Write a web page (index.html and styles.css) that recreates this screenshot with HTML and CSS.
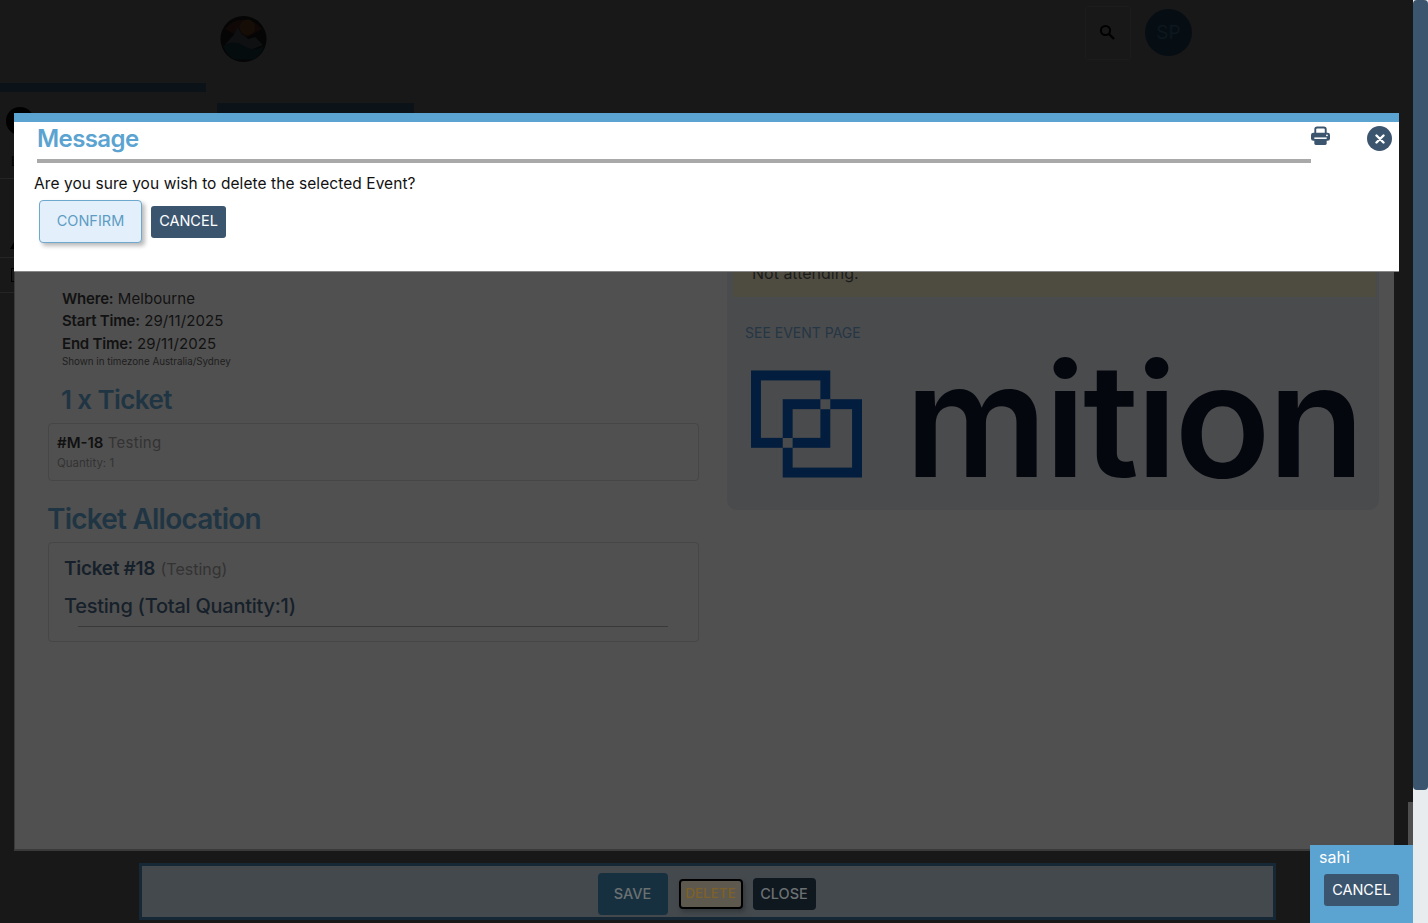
FILE: index.html
```html
<!DOCTYPE html>
<html lang="en">
<head>
<meta charset="utf-8">
<title>Message</title>
<link rel="stylesheet" href="styles.css">
</head>
<body>
<div class="page">
  <div class="main">
    <header class="topbar">
      <div class="brand">
        <svg class="logo" viewBox="0 0 48 48" aria-hidden="true">
          <circle cx="24" cy="24" r="23.5" fill="#050506"/>
          <path d="M5 14A23 23 0 0 1 43 14L24 24Z" fill="#0f0807"/>
          <circle cx="28" cy="12" r="8" fill="#160e06"/>
          <path d="M4 31L14 20L18 12L22 19L29 24L36 22L44 30L24 38Z" fill="#0e1011"/>
          <path d="M3 31Q14 24 24 31T45 31Q42 42 34 45L14 45Q6 40 3 31Z" fill="#050c0e"/>
        </svg>
      </div>
      <div class="actions">
        <div class="search">
          <svg viewBox="0 0 16 16" class="search-icon" aria-hidden="true"><circle cx="6.5" cy="6.5" r="4.6" fill="none" stroke="#000" stroke-width="2"/><path d="M10 10L15 15" stroke="#000" stroke-width="2.4"/></svg>
        </div>
        <div class="avatar">SP</div>
      </div>
    </header>
    <div class="subbar">
      <div class="side-strip"></div>
      <div class="tab-strip"></div>
    </div>
    <div class="rail">
      <div class="rail-dot"></div>
      <div class="rail-l">L</div>
      <div class="rail-line one"></div>
      <div class="rail-tri"></div>
      <div class="rail-line two"></div>
      <div class="rail-box"></div>
      <div class="rail-line three"></div>
    </div>
  </div>
  <div class="scroll"><div class="thumb"></div></div>

  <section class="dialog">
    <div class="dialog-col left">
      <p class="line"><b>Where:</b> Melbourne</p>
      <p class="line"><b>Start Time:</b> 29/11/2025</p>
      <p class="line"><b>End Time:</b> 29/11/2025</p>
      <p class="tz">Shown in timezone Australia/Sydney</p>
      <h2 class="h-ticket">1 x Ticket</h2>
      <div class="ticket-box">
        <div class="ticket-name"><b>#M-18</b> <span>Testing</span></div>
        <div class="ticket-qty">Quantity: 1</div>
      </div>
      <h2 class="h-alloc">Ticket Allocation</h2>
      <div class="alloc-box">
        <div class="alloc-title"><b>Ticket #18</b> <span>(Testing)</span></div>
        <div class="alloc-sub">Testing (Total Quantity:1)</div>
        <div class="alloc-rule"></div>
      </div>
    </div>
    <div class="dialog-col right">
      <div class="event-card">
        <div class="notice">Not attending.</div>
        <a class="event-link">SEE EVENT PAGE</a>
        <div class="mition">
          <svg class="mition-mark" viewBox="0 0 112 108" aria-hidden="true">
            <rect x="5" y="5" width="70" height="68" fill="none" stroke="#021d3e" stroke-width="10"/>
            <rect x="37" y="34" width="70" height="69" fill="none" stroke="#021d3e" stroke-width="10"/>
            <path fill="#4a4b4d" d="M70 29H80V39H70ZM32 68H42V78H32Z"/>
          </svg>
          <span class="mition-word">mition</span>
        </div>
      </div>
    </div>
  </section>

  <div class="footer-bar">
    <button class="fbtn save">SAVE</button>
    <button class="fbtn delete">DELETE</button>
    <button class="fbtn close">CLOSE</button>
  </div>

  <div class="side-sliver"></div>

  <section class="modal">
    <div class="modal-head">
      <h1 class="modal-title">Message</h1>
      <svg class="print" viewBox="0 0 20 20" aria-hidden="true">
        <path fill="none" stroke="#3b556f" stroke-width="2" d="M4.5 7V3Q4.5 1 6.5 1H13.5Q15.5 1 15.5 3V7"/>
        <rect x="0" y="6.5" width="20" height="8.5" rx="2.5" fill="#3b556f"/>
        <rect x="3.5" y="11" width="13" height="8.5" rx="1.5" fill="#3b556f"/>
        <rect x="3.5" y="11.5" width="13" height="1.6" fill="#fff"/>
        <circle cx="16.8" cy="9.3" r="1" fill="#fff"/>
      </svg>
      <div class="x-btn"><svg viewBox="0 0 10 10" aria-hidden="true"><path d="M1.5 1.5L8.5 8.5M8.5 1.5L1.5 8.5" stroke="#fff" stroke-width="2.4" stroke-linecap="round"/></svg></div>
    </div>
    <p class="modal-text">Are you sure you wish to delete the selected Event?</p>
    <div class="modal-actions">
      <button class="btn-confirm">CONFIRM</button>
      <button class="btn-cancel">CANCEL</button>
    </div>
  </section>

  <aside class="toast">
    <div class="toast-name">sahi</div>
    <button class="btn-cancel toast-btn">CANCEL</button>
  </aside>
</div>
</body>
</html>
```
FILE: styles.css
```css
* { box-sizing: border-box; }
html, body { margin: 0; padding: 0; height: 100%; overflow: hidden; }
body { font-family: "Inter", "Open Sans", sans-serif; background: #181818; color: #111; }
button { font-family: inherit; border: 0; cursor: pointer; }
h1, h2, p { margin: 0; }

.page { position: relative; display: flex; width: 1428px; height: 923px; overflow: hidden; background: #181818; }
.main { flex: 1; min-width: 0; }

.scroll { width: 15px; background: #e8ecef; }
.thumb { height: 790px; background: #3b556f; border-radius: 4px; }

.topbar { display: flex; justify-content: space-between; height: 83px; }
.brand { padding: 15px 0 0 220px; }
.logo { display: block; width: 47px; height: 48px; }
.actions { display: flex; gap: 14px; padding: 6px 221px 0 0; }
.search { display: flex; align-items: center; justify-content: center; width: 46px; height: 54px; border: 1px solid #1c1c1c; border-radius: 3px; }
.search-icon { width: 16px; height: 16px; margin: -2px 2px 0 0; }
.avatar { display: flex; align-items: center; justify-content: center; width: 47px; height: 47px; margin-top: 3px; border-radius: 50%; background: #060e14; color: #0d171e; font-size: 19px; }

.subbar { display: flex; align-items: flex-start; gap: 11px; }
.side-strip { width: 206px; height: 9px; background: #0b1218; }
.tab-strip { width: 197px; height: 11px; margin-top: 20px; background: #0b1218; }

.rail { position: relative; width: 14px; height: 200px; margin-top: -14px; }
.rail-dot { position: absolute; left: 6px; top: 7px; width: 28px; height: 28px; border-radius: 50%; background: #000; }
.rail-l { position: absolute; left: 11px; top: 53px; font-size: 13px; line-height: 16px; color: #000; }
.rail-line { position: absolute; left: 0; width: 14px; height: 1px; background: #252525; }
.rail-line.one { top: 78px; }
.rail-line.two { top: 157px; }
.rail-line.three { top: 192px; }
.rail-tri { position: absolute; left: 10px; top: 142px; border-bottom: 7px solid #000; border-left: 4px solid transparent; }
.rail-box { position: absolute; left: 11px; top: 168px; width: 4px; height: 14px; border: 1px solid #000; border-right: 0; }

.dialog { position: absolute; left: 14px; top: 113px; display: flex; width: 1380px; height: 738px; padding: 0 15px 0 33px; background: #505050; border: 1px solid #3a3a3a; border-width: 0 0 2px 1px; }
.dialog-col.left { flex: none; width: 651px; padding-top: 175px; }
.dialog-col.right { flex: 1; min-width: 0; padding-left: 28px; }

.line { height: 22.4px; padding-left: 14px; font-size: 15px; line-height: 22.4px; color: #121212; letter-spacing: 0.1px; }
.line b { font-weight: 600; letter-spacing: -0.2px; }
.tz { padding: 0 0 0 14px; font-size: 9.8px; line-height: 14px; color: #1e1e1e; }
.h-ticket { margin: 11.6px 0 0 13px; font-size: 26px; line-height: 38px; font-weight: 600; letter-spacing: -0.6px; color: #1f3543; }
.ticket-box { height: 58px; margin-top: 4px; padding: 7px 8px; border: 1px solid #464646; border-radius: 4px; }
.ticket-name { font-size: 15px; line-height: 24px; color: #333; }
.ticket-name b { color: #111; font-weight: 600; }
.ticket-name span { letter-spacing: 0.3px; }
.ticket-qty { font-size: 11.5px; line-height: 16px; color: #333; }
.h-alloc { margin: 19px 0 0 -1px; font-size: 28px; line-height: 38px; font-weight: 600; letter-spacing: -0.78px; color: #1f3543; }
.alloc-box { height: 100px; margin-top: 4px; padding: 13px 15px 0; border: 1px solid #464646; border-radius: 4px; }
.alloc-title { font-size: 19px; line-height: 26px; color: #16202a; }
.alloc-title b { font-weight: 600; letter-spacing: -0.3px; }
.alloc-title span { font-size: 16px; font-weight: 400; color: #333; }
.alloc-sub { margin: 11px 0 0 0; font-size: 20px; line-height: 27px; font-weight: 500; letter-spacing: -0.25px; color: #16202a; }
.alloc-rule { height: 1px; margin: 6px 15px 0 14px; background: #3a3a3a; }

.event-card { height: 397px; padding: 0 3px 0 6px; background: #4a4b4d; border-radius: 0 0 10px 10px; }
.notice { height: 184px; padding: 148px 0 0 19px; background: #4e4b40; font-size: 16px; line-height: 24px; color: #1b1b1b; }
.event-link { display: block; margin: 26px 0 0 12px; font-size: 14px; line-height: 20px; color: #253644; }
.mition { display: flex; align-items: flex-end; gap: 43px; margin: 14px 0 0 18px; height: 121px; }
.mition-mark { flex: none; width: 111px; height: 108px; }
.mition-word { height: 100px; margin-bottom: 8px; font-size: 158px; font-weight: 600; line-height: 100px; letter-spacing: -2.8px; color: #05070f; }

.footer-bar { position: absolute; left: 139px; top: 863px; display: flex; align-items: center; justify-content: center; gap: 10px; width: 1137px; height: 57px; padding: 5px 2px 0 0; background: #44494d; border: 3px solid #162836; }
.fbtn { padding: 0 0 2px; border-radius: 4px; color: #6b7072; font-size: 14.5px; font-weight: 500; }
.save { width: 70px; height: 42px; margin-right: 1px; background: #17303f; }
.delete { width: 64px; height: 30px; background: #5e594f; border: 2px solid #000; color: #7d6128; font-size: 13.5px; box-shadow: 2px 3px 4px #33383c; }
.close { width: 63px; height: 32px; background: #0f171f; }

.side-sliver { position: absolute; left: 1408px; top: 802px; width: 5px; height: 43px; background: #4f4f4f; }

.modal { position: absolute; left: 14px; top: 113px; width: 1385px; height: 159px; padding: 0 0 0 20px; background: #fff; border-top: 9px solid #5ba3d0; border-bottom: 1px solid #888; }
.modal-head { position: relative; width: 1274px; height: 41px; margin-left: 3px; border-bottom: 4px solid #a9a9a9; }
.modal-title { font-size: 24px; line-height: 34px; font-weight: 600; letter-spacing: -0.6px; color: #5ba3d0; }
.print { position: absolute; left: 1274px; top: 4px; width: 19px; height: 20px; }
.x-btn { position: absolute; left: 1330px; top: 4px; display: flex; align-items: center; justify-content: center; width: 25px; height: 25px; border-radius: 50%; background: #3b556f; }
.x-btn svg { width: 10px; height: 10px; }
.modal-text { margin-top: 10px; font-size: 15.5px; line-height: 22px; color: #111; letter-spacing: 0.07px; }
.modal-actions { display: flex; align-items: center; gap: 9px; margin: 5px 0 0 5px; }
.btn-confirm { width: 103px; height: 43px; padding: 0 0 2px; background: #e3f0fb; border: 1px solid #6ea8cc; border-radius: 4px; color: #5e9cc4; font-size: 14.5px; box-shadow: 3px 3px 4px #bbb; }
.btn-cancel { width: 75px; height: 32px; padding: 0 0 2px; background: #3b556f; border-radius: 3px; color: #fff; font-size: 14.5px; }

.toast { position: absolute; left: 1310px; top: 845px; width: 103px; height: 78px; padding: 1px 0 0 9px; background: #5ba3d0; color: #fff; }
.toast-name { font-size: 16px; line-height: 22px; }
.toast-btn { display: block; margin: 6px 0 0 5px; }
```
